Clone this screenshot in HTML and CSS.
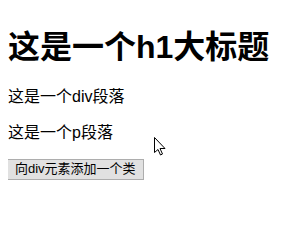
FILE: index.html
```html
<!DOCTYPE html>
<html lang="zh">
<head>
    <meta charset="UTF-8">
    <title>addClass</title>
    <link rel="stylesheet" href="styles.css">
</head>
<body>
    <h1>这是一个h1大标题</h1>
    <div>这是一个div段落</div>
    <p>这是一个p段落</p>
    <button class="btn">向div元素添加一个类</button>

    <svg class="cursor" width="12" height="19" viewBox="0 0 12 19">
        <path d="M0.5 0.5 L0.5 15.5 L4 12.5 L6.5 18 L8.5 17 L6 11.5 L11 11.5 Z" fill="#fff" stroke="#000" stroke-width="1"/>
    </svg>
</body>
</html>
```

FILE: styles.css
```css
body {
    font-family: "Liberation Sans", "Noto Sans CJK SC", sans-serif;
    font-size: 16px;
    color: #000;
    line-height: 1.25;
}
h1 {
    font-size: 32px;
    line-height: 1.15;
    margin: 21px 0;
}
p {
    margin: 16px 0 15px;
}
.btn {
    font-family: "Liberation Sans", "Noto Sans CJK SC", sans-serif;
    font-size: 13px;
    line-height: 1.15;
    margin-left: -1px;
    padding: 2px 7px;
    background: #e1e1e1;
    border: 1px solid #adadad;
    color: #000;
}
.cursor {
    position: absolute;
    left: 154px;
    top: 137px;
}
```
